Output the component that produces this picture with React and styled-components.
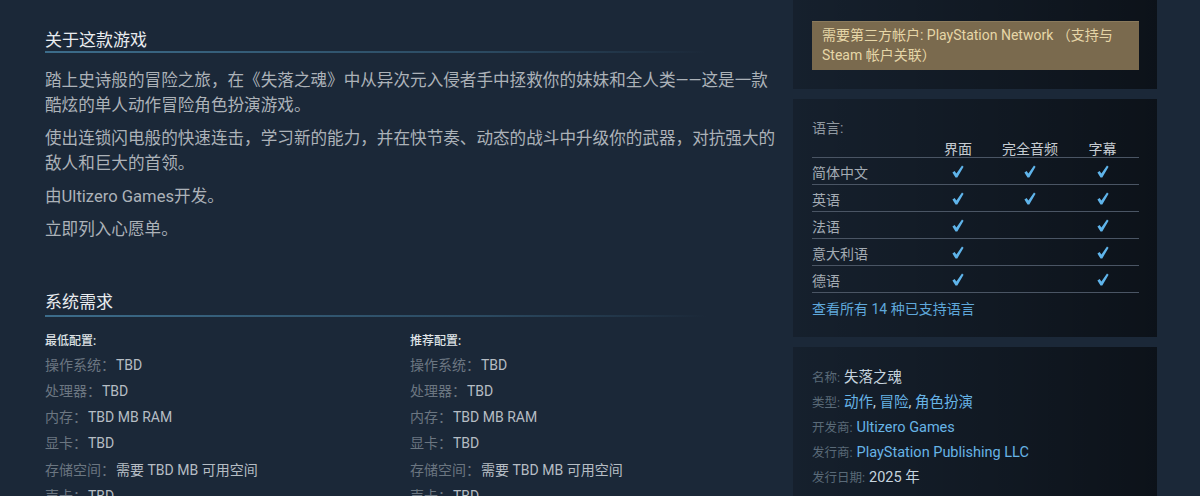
import React from "react";
import styled, { createGlobalStyle } from "styled-components";

const GlobalStyle = createGlobalStyle`
  html, body {
    margin: 0;
    padding: 0;
    background: #1b2838;
    height: 100%;
    overflow: hidden;
  }
  body {
    font-family: "Roboto", "Noto Sans CJK SC", sans-serif;
    color: #acb2b8;
  }
`;

const Page = styled.div`
  display: flex;
  align-items: flex-start;
  width: 1200px;
  height: 496px;
  overflow: hidden;
  background: #1b2838;
`;

const MainColumn = styled.div`
  width: 735px;
  padding: 28px 0 0 45px;
  flex-shrink: 0;
`;

const SideColumn = styled.div`
  width: 364px;
  margin-left: 13px;
  display: flex;
  flex-direction: column;
  gap: 10px;
  flex-shrink: 0;
`;

const SectionTitle = styled.h2`
  margin: ${(p) => (p.$spaced ? "47.5px" : "0")} 0 0;
  padding: 0 0 2px;
  font-size: 17px;
  line-height: 24px;
  font-weight: 400;
  color: #e9ecef;
  &::after {
    content: "";
    display: block;
    height: 2px;
    margin-top: ${(p) => (p.$spaced ? "1px" : "-1px")};
    background: linear-gradient(
      to right,
      rgba(62, 112, 143, 0.95) 0%,
      rgba(54, 96, 124, 0.6) 60%,
      rgba(54, 96, 124, 0) 90%
    );
  }
`;

const Description = styled.div`
  margin-top: 13px;
`;

const Paragraph = styled.p`
  margin: 0 0 8px;
  font-size: 16.6px;
  line-height: 25px;
  color: #acb2b8;
`;

const ReqGrid = styled.div`
  display: grid;
  grid-template-columns: 365px 365px;
  margin-top: 14px;
`;

const ReqColumn = styled.div`
  display: flex;
  flex-direction: column;
`;

const ReqHeading = styled.div`
  font-size: 12px;
  line-height: 16px;
  font-weight: 500;
  color: #dfe3e6;
  margin-bottom: 3px;
`;

const ReqRow = styled.div`
  font-size: 14px;
  line-height: 26.3px;
  color: #b6bdc4;
  white-space: nowrap;
`;

const ReqLabel = styled.span`
  color: #6b7681;
  margin-right: 1px;
`;

const Panel = styled.div`
  padding: ${(p) => p.$pad || "19px 18px 18px 19px"};
  background: linear-gradient(
    to right,
    rgba(0, 0, 0, 0.2) 0%,
    rgba(0, 0, 0, 0.4) 60%,
    rgba(0, 0, 0, 0.55) 100%
  );
`;

const Notice = styled.div`
  background: #7a6a4e;
  border-top: 1px solid #8a7a5c;
  color: #e6d6a7;
  font-size: 14px;
  line-height: 20px;
  padding: 3px 10px 5px 10px;
  white-space: nowrap;
`;

const LangLabel = styled.div`
  font-size: 14px;
  line-height: 20px;
  color: #8f98a0;
`;

const LangTable = styled.div`
  display: flex;
  flex-direction: column;
  width: 327px;
`;

const LangRow = styled.div`
  display: grid;
  grid-template-columns: 110px 72px 72px 73px;
  align-items: center;
  height: ${(p) => (p.$head ? "19px" : "26px")};
  border-bottom: 1px solid #4a5564;
  font-size: 14px;
  color: ${(p) => (p.$head ? "#c6ccd2" : "#a3abb3")};
`;

const LangName = styled.span`
  padding-top: ${(p) => (p.$head ? "0" : "1px")};
`;

const Cell = styled.span`
  display: flex;
  justify-content: center;
  align-items: center;
`;

const AllLink = styled.a`
  display: block;
  margin-top: 6px;
  font-size: 14px;
  line-height: 20px;
  color: #5fa8db;
  text-decoration: none;
`;

const DetailRow = styled.div`
  font-size: 14.5px;
  line-height: 25px;
  color: #c6d4df;
  white-space: nowrap;
`;

const DetailLabel = styled.span`
  font-size: 12.5px;
  color: #5a6a78;
  margin-right: 4px;
`;

const DetailLink = styled.a`
  color: #67b4e6;
  text-decoration: none;
`;

const Check = () => (
  <svg width="12" height="13" viewBox="0 0 12 13" aria-hidden="true">
    <path
      d="M0.4 7.6 L2.6 6.0 L4.4 8.5 L10.0 0.5 L11.6 1.7 L5.3 12.4 L3.5 12.4 Z"
      fill="#5fb4ea"
    />
  </svg>
);

const specs = [
  ["操作系统：", "TBD"],
  ["处理器：", "TBD"],
  ["内存：", "TBD MB RAM"],
  ["显卡：", "TBD"],
  ["存储空间：", "需要 TBD MB 可用空间"],
  ["声卡：", "TBD"],
];

const languages = [
  ["简体中文", true, true, true],
  ["英语", true, true, true],
  ["法语", true, false, true],
  ["意大利语", true, false, true],
  ["德语", true, false, true],
];

const Requirements = ({ title }) => (
  <ReqColumn>
    <ReqHeading>{title}</ReqHeading>
    {specs.map(([label, value]) => (
      <ReqRow key={label}>
        <ReqLabel>{label}</ReqLabel>
        {value}
      </ReqRow>
    ))}
  </ReqColumn>
);

export default function App() {
  return (
    <>
      <GlobalStyle />
      <Page>
        <MainColumn>
          <SectionTitle>关于这款游戏</SectionTitle>
          <Description>
            <Paragraph>
              踏上史诗般的冒险之旅，在《失落之魂》中从异次元入侵者手中拯救你的妹妹和全人类——这是一款
              <br />
              酷炫的单人动作冒险角色扮演游戏。
            </Paragraph>
            <Paragraph>
              使出连锁闪电般的快速连击，学习新的能力，并在快节奏、动态的战斗中升级你的武器，对抗强大的
              <br />
              敌人和巨大的首领。
            </Paragraph>
            <Paragraph>由Ultizero Games开发。</Paragraph>
            <Paragraph>立即列入心愿单。</Paragraph>
          </Description>

          <SectionTitle $spaced>系统需求</SectionTitle>
          <ReqGrid>
            <Requirements title="最低配置:" />
            <Requirements title="推荐配置:" />
          </ReqGrid>
        </MainColumn>

        <SideColumn>
          <Panel $pad="21px 18px 19px 19px">
            <Notice>
              需要第三方帐户: PlayStation Network （支持与
              <br />
              Steam 帐户关联）
            </Notice>
          </Panel>

          <Panel $pad="19px 18px 18px 19px">
            <LangLabel>语言:</LangLabel>
            <LangTable>
              <LangRow $head>
                <LangName $head />
                <Cell>界面</Cell>
                <Cell>完全音频</Cell>
                <Cell>字幕</Cell>
              </LangRow>
              {languages.map(([name, ui, audio, subs]) => (
                <LangRow key={name}>
                  <LangName>{name}</LangName>
                  <Cell>{ui && <Check />}</Cell>
                  <Cell>{audio && <Check />}</Cell>
                  <Cell>{subs && <Check />}</Cell>
                </LangRow>
              ))}
            </LangTable>
            <AllLink href="#">查看所有 14 种已支持语言</AllLink>
          </Panel>

          <Panel $pad="17.5px 18px 30px 19px">
            <DetailRow>
              <DetailLabel>名称:</DetailLabel>失落之魂
            </DetailRow>
            <DetailRow>
              <DetailLabel>类型:</DetailLabel>
              <DetailLink href="#">动作</DetailLink>,{" "}
              <DetailLink href="#">冒险</DetailLink>,{" "}
              <DetailLink href="#">角色扮演</DetailLink>
            </DetailRow>
            <DetailRow>
              <DetailLabel>开发商:</DetailLabel>
              <DetailLink href="#">Ultizero Games</DetailLink>
            </DetailRow>
            <DetailRow>
              <DetailLabel>发行商:</DetailLabel>
              <DetailLink href="#">PlayStation Publishing LLC</DetailLink>
            </DetailRow>
            <DetailRow>
              <DetailLabel>发行日期:</DetailLabel>2025 年
            </DetailRow>
          </Panel>
        </SideColumn>
      </Page>
    </>
  );
}
